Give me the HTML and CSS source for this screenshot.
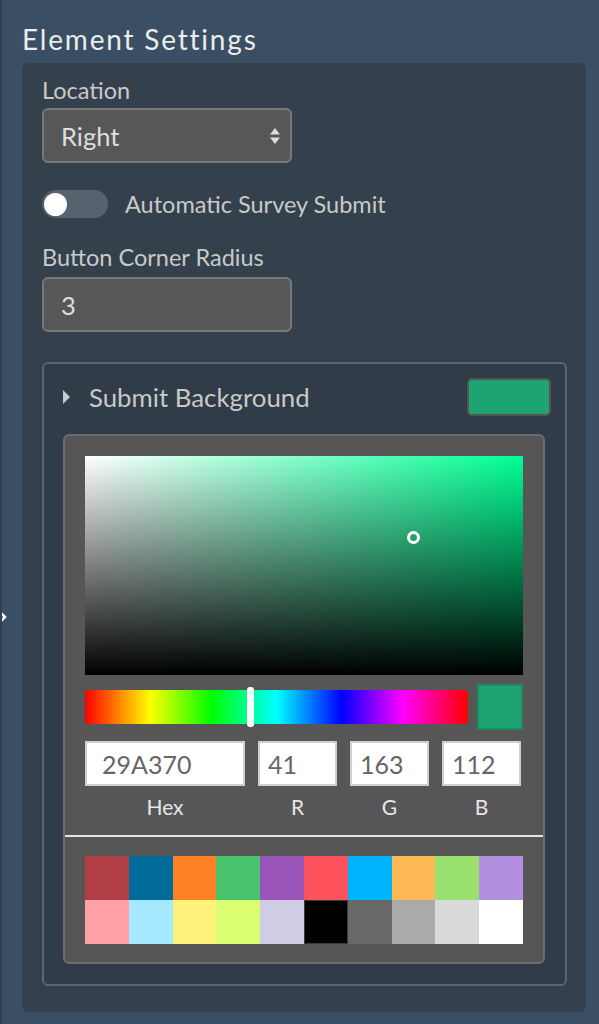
FILE: index.html
```html
<!DOCTYPE html>
<html lang="en">

<head>

  <meta charset="UTF-8">
  <meta name="viewport" content="width=device-width, initial-scale=1.0">

  <title>Element Settings</title>

  <link rel="stylesheet" href="styles.css">

</head>

<body>

  <div class="side_tab">
    <svg width="7" height="12" viewBox="0 0 7 12"><path d="M0.5 1.5 L5 6 L0.5 10.5" fill="none" stroke="#fff" stroke-width="2.5"/></svg>
  </div>

  <main class="page">
    <h1 class="page_title">Element Settings</h1>

    <section class="panel">
      <label class="field_label">Location</label>
      <div class="select">
        <span>Right</span>
        <svg class="select_arrows" width="10" height="18" viewBox="0 0 10 18">
          <path d="M5 1 L10 7.5 L0 7.5 Z" fill="#ddd"/>
          <path d="M5 17 L10 10.5 L0 10.5 Z" fill="#ddd"/>
        </svg>
      </div>

      <div class="toggle_row">
        <span class="toggle"><span class="toggle_knob"></span></span>
        <span class="toggle_label">Automatic Survey Submit</span>
      </div>

      <label class="field_label">Button Corner Radius</label>
      <div class="text_input">3</div>

      <div class="color_box">
        <div class="color_head">
          <svg class="caret" width="7" height="14" viewBox="0 0 7 14"><path d="M0 0 L7 7 L0 14 Z" fill="#c8c8c8"/></svg>
          <span class="color_title">Submit Background</span>
          <span class="color_chip"></span>
        </div>

        <div class="picker">
          <div class="sat">
            <span class="sat_handle"></span>
          </div>
          <div class="hue_row">
            <div class="hue">
              <span class="hue_handle"></span>
            </div>
            <span class="preview"></span>
          </div>
          <div class="values">
            <div class="val hex"><span class="val_box">29A370</span><span class="val_name">Hex</span></div>
            <div class="val"><span class="val_box">41</span><span class="val_name">R</span></div>
            <div class="val"><span class="val_box">163</span><span class="val_name">G</span></div>
            <div class="val"><span class="val_box">112</span><span class="val_name">B</span></div>
          </div>
          <div class="swatches">
            <span class="sw" style="background:#b33f46"></span>
            <span class="sw" style="background:#016b9a"></span>
            <span class="sw" style="background:#fd8024"></span>
            <span class="sw" style="background:#48c46f"></span>
            <span class="sw" style="background:#9a55bb"></span>
            <span class="sw" style="background:#fe535c"></span>
            <span class="sw" style="background:#00b5fd"></span>
            <span class="sw" style="background:#feb957"></span>
            <span class="sw" style="background:#99e06e"></span>
            <span class="sw" style="background:#b38fe0"></span>
            <span class="sw" style="background:#ffa0a7"></span>
            <span class="sw" style="background:#a5e9fe"></span>
            <span class="sw" style="background:#fef17c"></span>
            <span class="sw" style="background:#dbfd72"></span>
            <span class="sw" style="background:#d1cce6"></span>
            <span class="sw sw_black" style="background:#000"></span>
            <span class="sw" style="background:#686868"></span>
            <span class="sw" style="background:#aaaaaa"></span>
            <span class="sw" style="background:#dadada"></span>
            <span class="sw" style="background:#ffffff"></span>
          </div>
        </div>
      </div>
    </section>
  </main>

</body>

</html>
```

FILE: styles.css
```css
* {
  box-sizing: border-box;
}
body {
  margin: 0;
  min-height: 1024px;
  background-color: #3a4f63;
  border-left: 2px solid #2f4052;
  font-family: Lato, "Open Sans", sans-serif;
  position: relative;
}
.side_tab {
  position: absolute;
  left: -2px;
  top: 557px;
  width: 8px;
  height: 120px;
  background-color: #3a4f63;
  display: flex;
  align-items: center;
}
.page {
  padding: 25px 13px 14px 20px;
}
.page_title {
  margin: 0 0 10px;
  font-size: 28px;
  font-weight: 400;
  letter-spacing: 1.8px;
  line-height: 28px;
  color: #ececec;
}
.panel {
  display: flex;
  flex-direction: column;
  align-items: flex-start;
  padding: 14px 19px 26px 20px;
  background-color: #34414d;
  border-radius: 6px;
}
.field_label {
  font-size: 23.5px;
  line-height: 26px;
  color: #c9c9c9;
}
.select, .text_input {
  display: flex;
  align-items: center;
  justify-content: space-between;
  width: 250px;
  height: 55px;
  margin-top: 5px;
  padding: 0 10px 0 17px;
  background-color: #575757;
  border: 2px solid #787878;
  border-radius: 6px;
  font-size: 25.5px;
  color: #dedede;
}
.toggle_row {
  display: flex;
  align-items: center;
  gap: 17px;
  margin: 27px 0 26px;
}
.toggle {
  display: flex;
  align-items: center;
  width: 66px;
  height: 28px;
  padding: 0 2px;
  background-color: #56636e;
  border-radius: 14px;
}
.toggle_knob {
  width: 23px;
  height: 23px;
  border-radius: 50%;
  background-color: #fff;
}
.toggle_label {
  font-size: 23.5px;
  color: #c9c9c9;
}
.text_input {
  margin-top: 7px;
}
.color_box {
  align-self: stretch;
  margin-top: 30px;
  padding: 14px 20px 20px 19px;
  background-color: #303c47;
  border: 2px solid #5b6670;
  border-radius: 6px;
}
.color_head {
  display: flex;
  align-items: center;
  margin-right: -6px;
}
.caret {
  margin-right: 19px;
}
.color_title {
  flex: 1;
  font-size: 25.8px;
  color: #c9c9c9;
}
.color_chip {
  width: 84px;
  height: 38px;
  background-color: #1ea373;
  border: 2px solid #555;
  border-radius: 5px;
}
.picker {
  margin-top: 18px;
  padding: 20px 20px 18px;
  background-color: #565656;
  border: 2px solid #6c6c6c;
  border-radius: 6px;
}
.sat {
  position: relative;
  height: 219px;
  background: linear-gradient(to top, #000, transparent), linear-gradient(to right, #fff, hsl(155, 100%, 50%));
}
.sat_handle {
  position: absolute;
  left: 322px;
  top: 75px;
  width: 13px;
  height: 13px;
  border: 3px solid #fff;
  border-radius: 50%;
}
.hue_row {
  display: flex;
  align-items: center;
  gap: 9px;
  margin-top: 9px;
}
.hue {
  position: relative;
  flex: 1;
  height: 34px;
  border-radius: 3px;
  background: linear-gradient(to right, #f00, #ff0 17%, #0f0 33%, #0ff 50%, #00f 67%, #f0f 83%, #f00);
}
.hue_handle {
  position: absolute;
  left: 162px;
  top: -3px;
  width: 7px;
  height: 40px;
  background-color: #fff;
  border-radius: 3px;
}
.preview {
  width: 46px;
  height: 46px;
  background-color: #1ea373;
  border: 2px solid #1a8d63;
}
.values {
  display: flex;
  gap: 13px;
  margin-top: 11px;
  padding-bottom: 16px;
  margin-left: -20px;
  margin-right: -20px;
  padding-left: 20px;
  padding-right: 20px;
  border-bottom: 2px solid #e4e4e4;
}
.val {
  display: flex;
  flex-direction: column;
  align-items: center;
  width: 79px;
}
.val.hex {
  width: 160px;
}
.val_box {
  width: 100%;
  height: 45px;
  padding: 0 0 0 8px;
  display: flex;
  align-items: center;
  background-color: #fff;
  border: 2px solid #cfcfcf;
  font-size: 25px;
  color: #666;
}
.hex .val_box {
  padding-left: 15px;
}
.val_name {
  margin-top: 8px;
  font-size: 21px;
  color: #e6e6e6;
}
.swatches {
  display: grid;
  grid-template-columns: repeat(10, 1fr);
  margin-top: 19px;
}
.sw {
  height: 44px;
}
.sw_black {
  border: 1px solid #3a3a3a;
}
```
